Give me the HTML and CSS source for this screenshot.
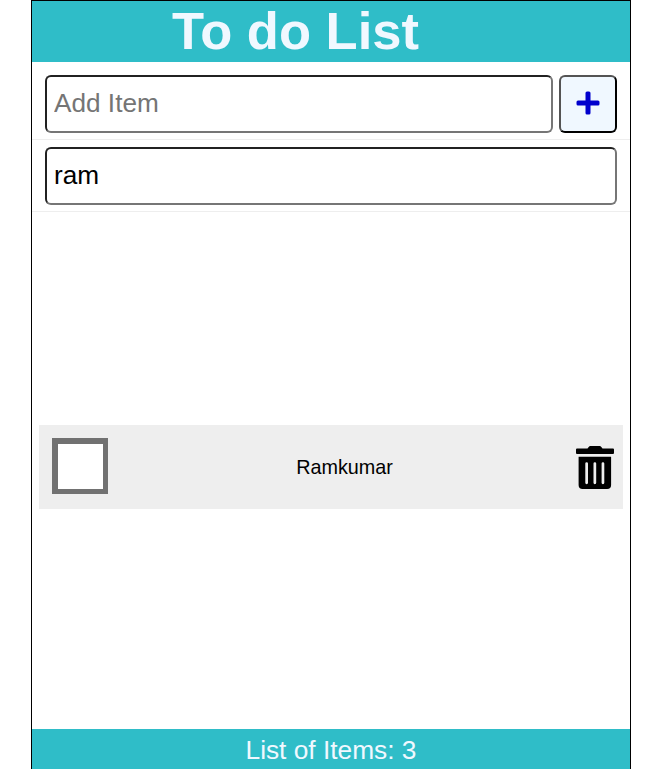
FILE: index.html
```html
<!DOCTYPE html>
<html lang="en">
<head>
<meta charset="utf-8">
<title>To do List</title>
<link rel="stylesheet" href="styles.css">
</head>
<body>
<div class="app">
  <header class="header"><h1>To do List</h1></header>
  <form class="row">
    <input class="field" type="text" placeholder="Add Item" aria-label="Add Item">
    <button class="add" type="button" aria-label="Add">
      <svg class="plus" viewBox="0 0 24 24"><path fill="currentColor" d="M9.500 2Q9.500.500 11 .500h2Q14.500.500 14.500 2v7.500H22Q23.500 9.500 23.500 11v2Q23.500 14.500 22 14.500h-7.500V22Q14.500 23.500 13 23.500h-2Q9.500 23.500 9.500 22v-7.500H2Q.500 14.500 .500 13v-2Q.500 9.500 2 9.500h7.500z"/></svg>
    </button>
  </form>
  <form class="row">
    <input class="field" type="text" value="ram" aria-label="Search">
  </form>
  <main class="main">
    <ul class="list">
      <li class="item">
        <span class="check" role="checkbox" aria-checked="false"></span>
        <label class="name">Ramkumar</label>
        <svg class="trash" viewBox="0 0 38 43"><path fill-rule="evenodd" d="M1 2.500h10.500L12.700.900Q13.300 0 14.400 0h9.200Q24.700 0 25.300.900L26.500 2.500H37Q38 2.500 38 3.500V7Q38 8 37 8H1Q0 8 0 7V3.500Q0 2.500 1 2.500zM2.600 10.700h32.500V39Q35.100 43 31.100 43H6.600Q2.600 43 2.600 39zM9.300 17.500v19.300a1.350 1.350 0 0 0 2.700 0V17.500a1.350 1.350 0 0 0-2.700 0zM17.500 17.500v19.300a1.350 1.350 0 0 0 2.700 0V17.500a1.350 1.350 0 0 0-2.700 0zM25.600 17.500v19.300a1.350 1.350 0 0 0 2.700 0V17.500a1.350 1.350 0 0 0-2.700 0z"/></svg>
      </li>
    </ul>
  </main>
  <footer class="footer">List of Items: 3</footer>
</div>
</body>
</html>
```
FILE: styles.css
```css
* { box-sizing: border-box; margin: 0; padding: 0; }
body { background: #fff; font-family: "Liberation Sans", Arial, sans-serif; color: #000; }
.app { width: 600px; height: 769px; margin-left: 31px; border: 1px solid #000; border-bottom: 0; display: flex; flex-direction: column; }
.header { height: 61px; background: #2fbdc8; color: aliceblue; display: flex; justify-content: center; align-items: center; padding: 0 71px 2px 0; }
h1 { font-size: 52.5px; line-height: 59px; white-space: nowrap; }
.row { display: flex; gap: 6px; padding: 7px 13px 6px; border-bottom: 1px solid #eee; height: 72px; }
.header + .row { height: 78px; padding-top: 13px; }
.field { flex: 1; min-width: 0; height: 58px; border: 2px inset #767676; border-radius: 6px; padding: 0 7px 2px; font: 26.2px "Liberation Sans", Arial, sans-serif; color: #000; }
.field::placeholder { color: #757575; }
.add { width: 58px; height: 58px; border: 2px outset #000; border-radius: 6px; background: aliceblue; color: #0000cd; display: flex; align-items: center; justify-content: center; padding-bottom: 2px; }
.plus { width: 24px; height: 24px; }
.main { flex: 1; display: flex; flex-direction: column; justify-content: center; padding: 0 7px; }
.list { list-style: none; margin-bottom: 7px; }
.item { height: 84px; background: #eee; display: flex; align-items: center; padding: 0 9px 0 13px; }
.check { width: 56px; height: 56px; border: solid #717171; border-width: 6px 5px 5px 6px; margin-bottom: 2px; background: #fff; }
.name { flex: 1; padding-left: 5px; text-align: center; font-size: 19.8px; }
.trash { width: 38px; height: 43px; }
.footer { height: 40px; background: #2fbdc8; color: aliceblue; font-size: 26.3px; line-height: 42px; text-align: center; }
```
